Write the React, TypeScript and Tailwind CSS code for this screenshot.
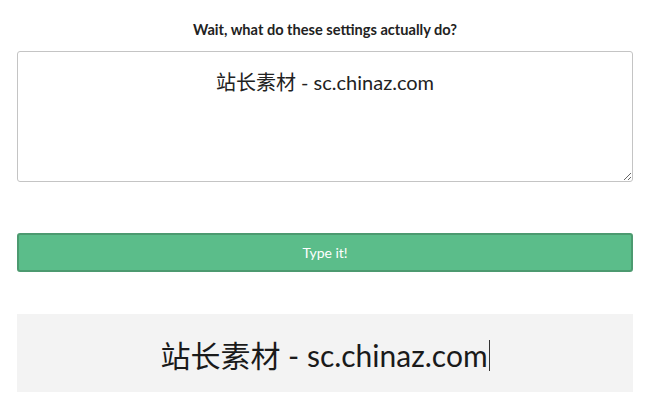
export default function App() {
  const font = { fontFamily: '"Lato", "Noto Sans CJK SC", sans-serif' };
  return (
    <div className="min-h-[419px] bg-white px-[17px]" style={font}>
      <h2 className="pt-[21px] text-center text-[14.6px] font-bold leading-[18px] text-[#222]">
        Wait, what do these settings actually do?
      </h2>
      <textarea
        className="mt-[12px] block h-[131px] w-full resize-y rounded-[3px] border border-[#c4c4c4] px-3 pt-[16px] text-center text-[20px] leading-[28px] text-[#222] outline-none"
        defaultValue="站长素材 - sc.chinaz.com"
      />
      <button className="mt-[51px] block h-[39px] w-full rounded-[3px] border-2 border-[#4c9a70] bg-[#5bbd8a] text-[14px] text-white">
        Type it!
      </button>
      <div className="mt-[42px] flex h-[78px] items-center justify-center bg-[#f3f3f3] pt-[4px] text-[30px] text-[#1a1a1a]">
        <span>站长素材 - sc.chinaz.com</span>
        <span className="ml-[1px] inline-block h-[31px] w-[1px] bg-[#333]" />
      </div>
    </div>
  );
}
